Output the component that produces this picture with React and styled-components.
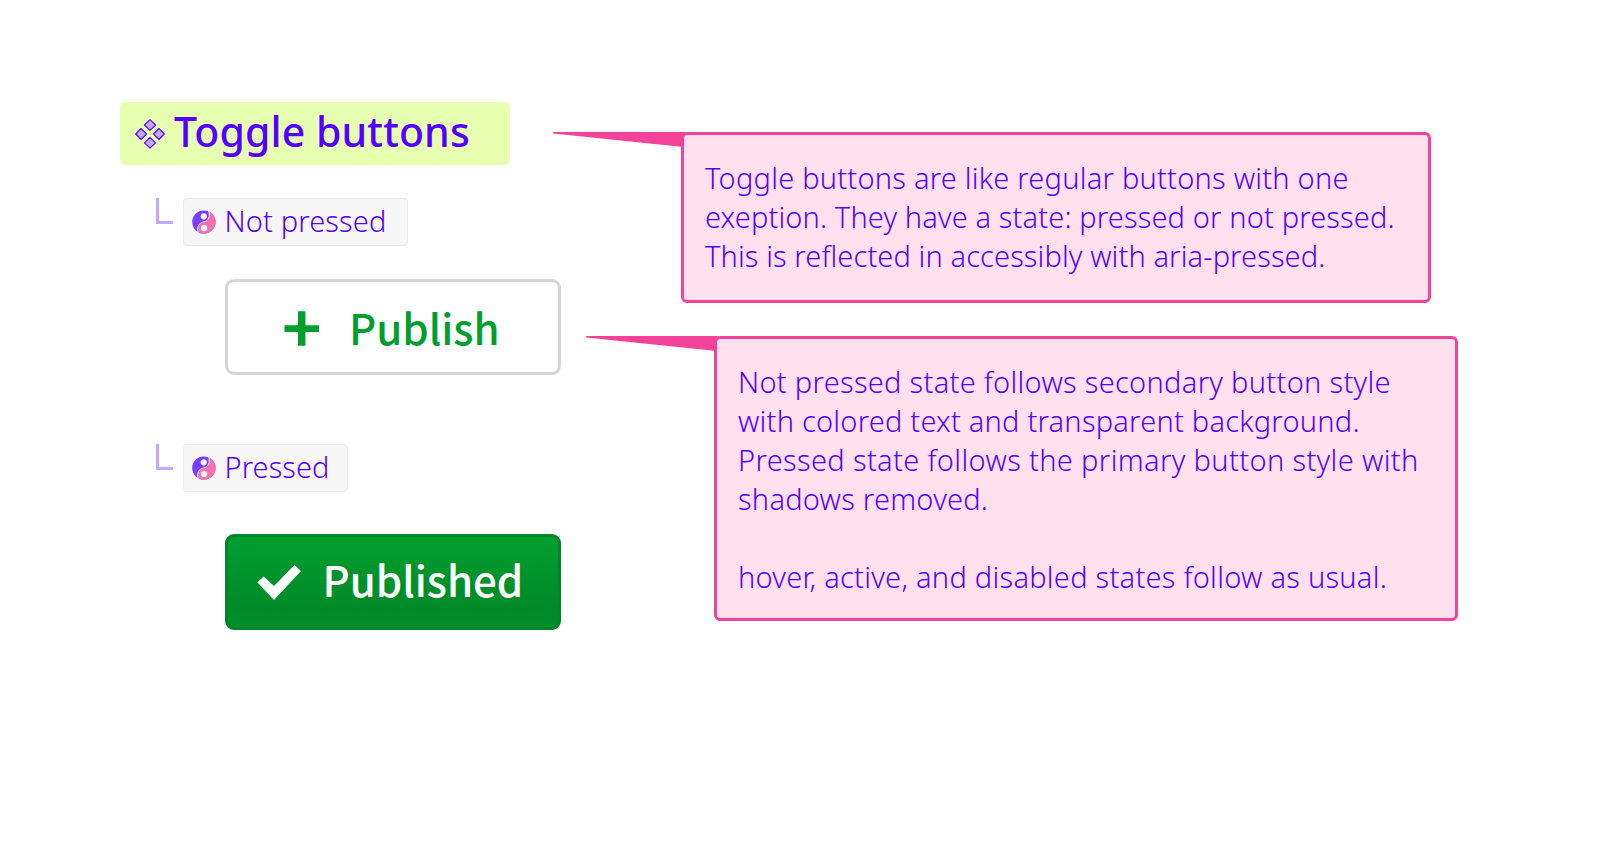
import React from "react";
import styled, { createGlobalStyle } from "styled-components";

const Global = createGlobalStyle`
  *, *::before, *::after { box-sizing: border-box; }
  body { margin: 0; background: #fff; }
`;

const Page = styled.main`
  display: flex;
  align-items: flex-start;
  width: 1602px;
  height: 846px;
  padding: 102px 0 0 120px;
  overflow: hidden;
  background: #fff;
  color: #5500ff;
  font-family: "Noto Sans", "Open Sans", sans-serif;
`;

const Specimens = styled.section`
  flex: none;
  width: 561px;
`;

const Heading = styled.h1`
  display: flex;
  align-items: center;
  gap: 9px;
  width: 390px;
  height: 63px;
  margin: 0 0 33px;
  padding-left: 15px;
  border-radius: 5px;
  background: #e6ffb0;
  font-size: 41px;
  font-weight: 500;
  line-height: 61px;
  letter-spacing: 0.1px;
  white-space: nowrap;
`;

const HeadingText = styled.span`
  display: block;
  padding-bottom: 5px;
`;

const Variant = styled.section`
  height: ${(p) => p.$height}px;
  padding-left: 36px;
`;

const VariantLabel = styled.div`
  display: flex;
  align-items: flex-start;
  gap: 10px;
  margin-bottom: ${(p) => p.$gap}px;
`;

const Elbow = styled.span`
  width: 17px;
  height: 25.5px;
  border: solid #c4a8ff;
  border-width: 0 0 3px 3px;
`;

const Tag = styled.h2`
  display: flex;
  align-items: center;
  gap: 9px;
  width: ${(p) => p.$width}px;
  height: 48px;
  margin: 0;
  padding-left: 7.5px;
  border: 1.5px solid #ebebeb;
  border-radius: 4px;
  background: #f7f7f7;
  font-size: 29px;
  font-weight: 300;
  line-height: 44px;
  letter-spacing: ${(p) => p.$spacing}px;
  white-space: nowrap;
`;

const TagText = styled.span`
  display: block;
  padding-bottom: 3px;
`;

const ToggleButton = styled.button`
  display: flex;
  align-items: center;
  width: 336px;
  height: 96px;
  margin: 0 0 0 69px;
  border: 3px solid ${(p) => (p.$pressed ? "#008529" : "#d5d5d5")};
  border-radius: 9px;
  padding: 0 0 0 ${(p) => (p.$pressed ? 29 : 56)}px;
  gap: ${(p) => (p.$pressed ? 21.5 : 30)}px;
  background: ${(p) =>
    p.$pressed
      ? "linear-gradient(#009e2f, #008a28 80%, #008f2b) padding-box, #008529"
      : "transparent"};
  color: ${(p) => (p.$pressed ? "#fff" : "#009e2f")};
  font-family: "Noto Sans CJK SC", "Noto Sans", sans-serif;
  font-size: 42px;
  font-weight: 500;
  line-height: 60px;
  text-align: left;
`;

const ButtonText = styled.span`
  display: block;
  padding-bottom: ${(p) => p.$lift}px;
`;

const Notes = styled.aside`
  display: flex;
  flex-direction: column;
  align-items: flex-start;
  gap: 33px;
  padding-top: 30px;
`;

const Callout = styled.div`
  position: relative;
  width: ${(p) => p.$width}px;
  height: ${(p) => p.$height}px;
  margin-left: ${(p) => p.$indent}px;
  padding: 23px 0 0 21px;
  border: 3px solid #f24399;
  border-radius: 6px;
  background: #ffe0ee;
  font-size: 29px;
  font-weight: 300;
  line-height: 39px;
  white-space: nowrap;
`;

const Pointer = styled.svg`
  position: absolute;
  top: -3px;
  left: -131px;
  width: 134px;
  height: 15px;
  overflow: visible;
`;

const Line = styled.div`
  height: 39px;
  letter-spacing: ${(p) => p.$spacing}px;
`;

const PlusGlyph = styled.svg`
  width: 35px;
  height: 35px;
  margin-top: 2px;
`;

const ComponentIcon = () => (
  <svg width="30" height="30" viewBox="0 0 30 30" fill="#c4a8ff" stroke="#5500ff" strokeWidth="1.1" strokeLinejoin="round">
    <path d="M15 0.7 20.6 6 15 11.4 9.4 6Z" />
    <path d="M15 18.4 20.6 23.8 15 29.1 9.4 23.8Z" />
    <path d="M6 9.5 11.6 15 6 20.5 0.7 15Z" />
    <path d="M24 9.5 29.3 15 24 20.5 18.4 15Z" />
  </svg>
);

const StateIcon = () => (
  <svg width="24" height="24" viewBox="0 0 24 24">
    <circle cx="11.7" cy="12" r="11.5" fill="#7b3dff" />
    <path
      d="M16.8 1.3A11.6 11.6 0 0 1 11.7 23.6C9.5 23.6 7.5 23 6.6 22.4C4.6 16.5 7.5 12.6 12 12C16.5 11.2 18.6 6.8 16.8 1.3Z"
      fill="#f570ae"
    />
    <path
      d="M16.6 0.4C18.4 6.5 16.3 11 12 11.8C7.2 12.4 4.4 16.5 6.3 23"
      fill="none"
      stroke="#f7f7f7"
      strokeWidth="1"
    />
    <circle cx="11.8" cy="6.3" r="3.1" fill="#f7f7f7" />
    <circle cx="12.1" cy="18.1" r="3.1" fill="#f7f7f7" />
  </svg>
);

const PlusIcon = () => (
  <PlusGlyph viewBox="0 0 35 35" fill="currentColor">
    <path d="M14 0.3h7.4v14h13.6v6.8H21.4v13.7H14V21.1H0.5v-6.8H14z" />
  </PlusGlyph>
);

const CheckIcon = () => (
  <svg width="44" height="36" viewBox="0 0 44 36" fill="currentColor">
    <path d="M0.3 18.2 6.7 12.4 17 22 37.5 0.9 44 6.9 17 36Z" />
  </svg>
);

function Note({ lines, ...box }) {
  return (
    <Callout {...box}>
      <Pointer viewBox="0 0 134 15">
        <path d="M0.3 0H131Q134 0 134 3H133Q131 3 131 5V14.8H128L0.3 1.4Q-0.6 0.6 0.3 0Z" fill="#f24399" />
      </Pointer>
      {lines.map(([text, spacing], i) => (
        <Line key={i} $spacing={spacing}>{text}</Line>
      ))}
    </Callout>
  );
}

const aboutToggles = [
  ["Toggle buttons are like regular buttons with one", 0.23],
  ["exeption. They have a state: pressed or not pressed.", 0.14],
  ["This is reflected in accessibly with aria-pressed.", 0.11],
];

const aboutStates = [
  ["Not pressed state follows secondary button style", 0.3],
  ["with colored text and transparent background.", 0.23],
  ["Pressed state follows the primary button style with", 0.36],
  ["shadows removed.", 0.25],
  ["", 0],
  ["hover, active, and disabled states follow as usual.", 0.27],
];

export default function App() {
  return (
    <>
      <Global />
      <Page>
        <Specimens>
          <Heading>
            <ComponentIcon />
            <HeadingText>Toggle buttons</HeadingText>
          </Heading>
          <Variant $height={246}>
            <VariantLabel $gap={33}>
              <Elbow />
              <Tag $width={225} $spacing={0.14}>
                <StateIcon />
                <TagText>Not pressed</TagText>
              </Tag>
            </VariantLabel>
            <ToggleButton aria-pressed="false">
              <PlusIcon />
              <ButtonText $lift={0}>Publish</ButtonText>
            </ToggleButton>
          </Variant>
          <Variant $height={186}>
            <VariantLabel $gap={42}>
              <Elbow />
              <Tag $width={165} $spacing={0.07}>
                <StateIcon />
                <TagText>Pressed</TagText>
              </Tag>
            </VariantLabel>
            <ToggleButton $pressed aria-pressed="true">
              <CheckIcon />
              <ButtonText $lift={6}>Published</ButtonText>
            </ToggleButton>
          </Variant>
        </Specimens>
        <Notes>
          <Note $width={750} $height={171} $indent={0} lines={aboutToggles} />
          <Note $width={744} $height={285} $indent={33} lines={aboutStates} />
        </Notes>
      </Page>
    </>
  );
}
